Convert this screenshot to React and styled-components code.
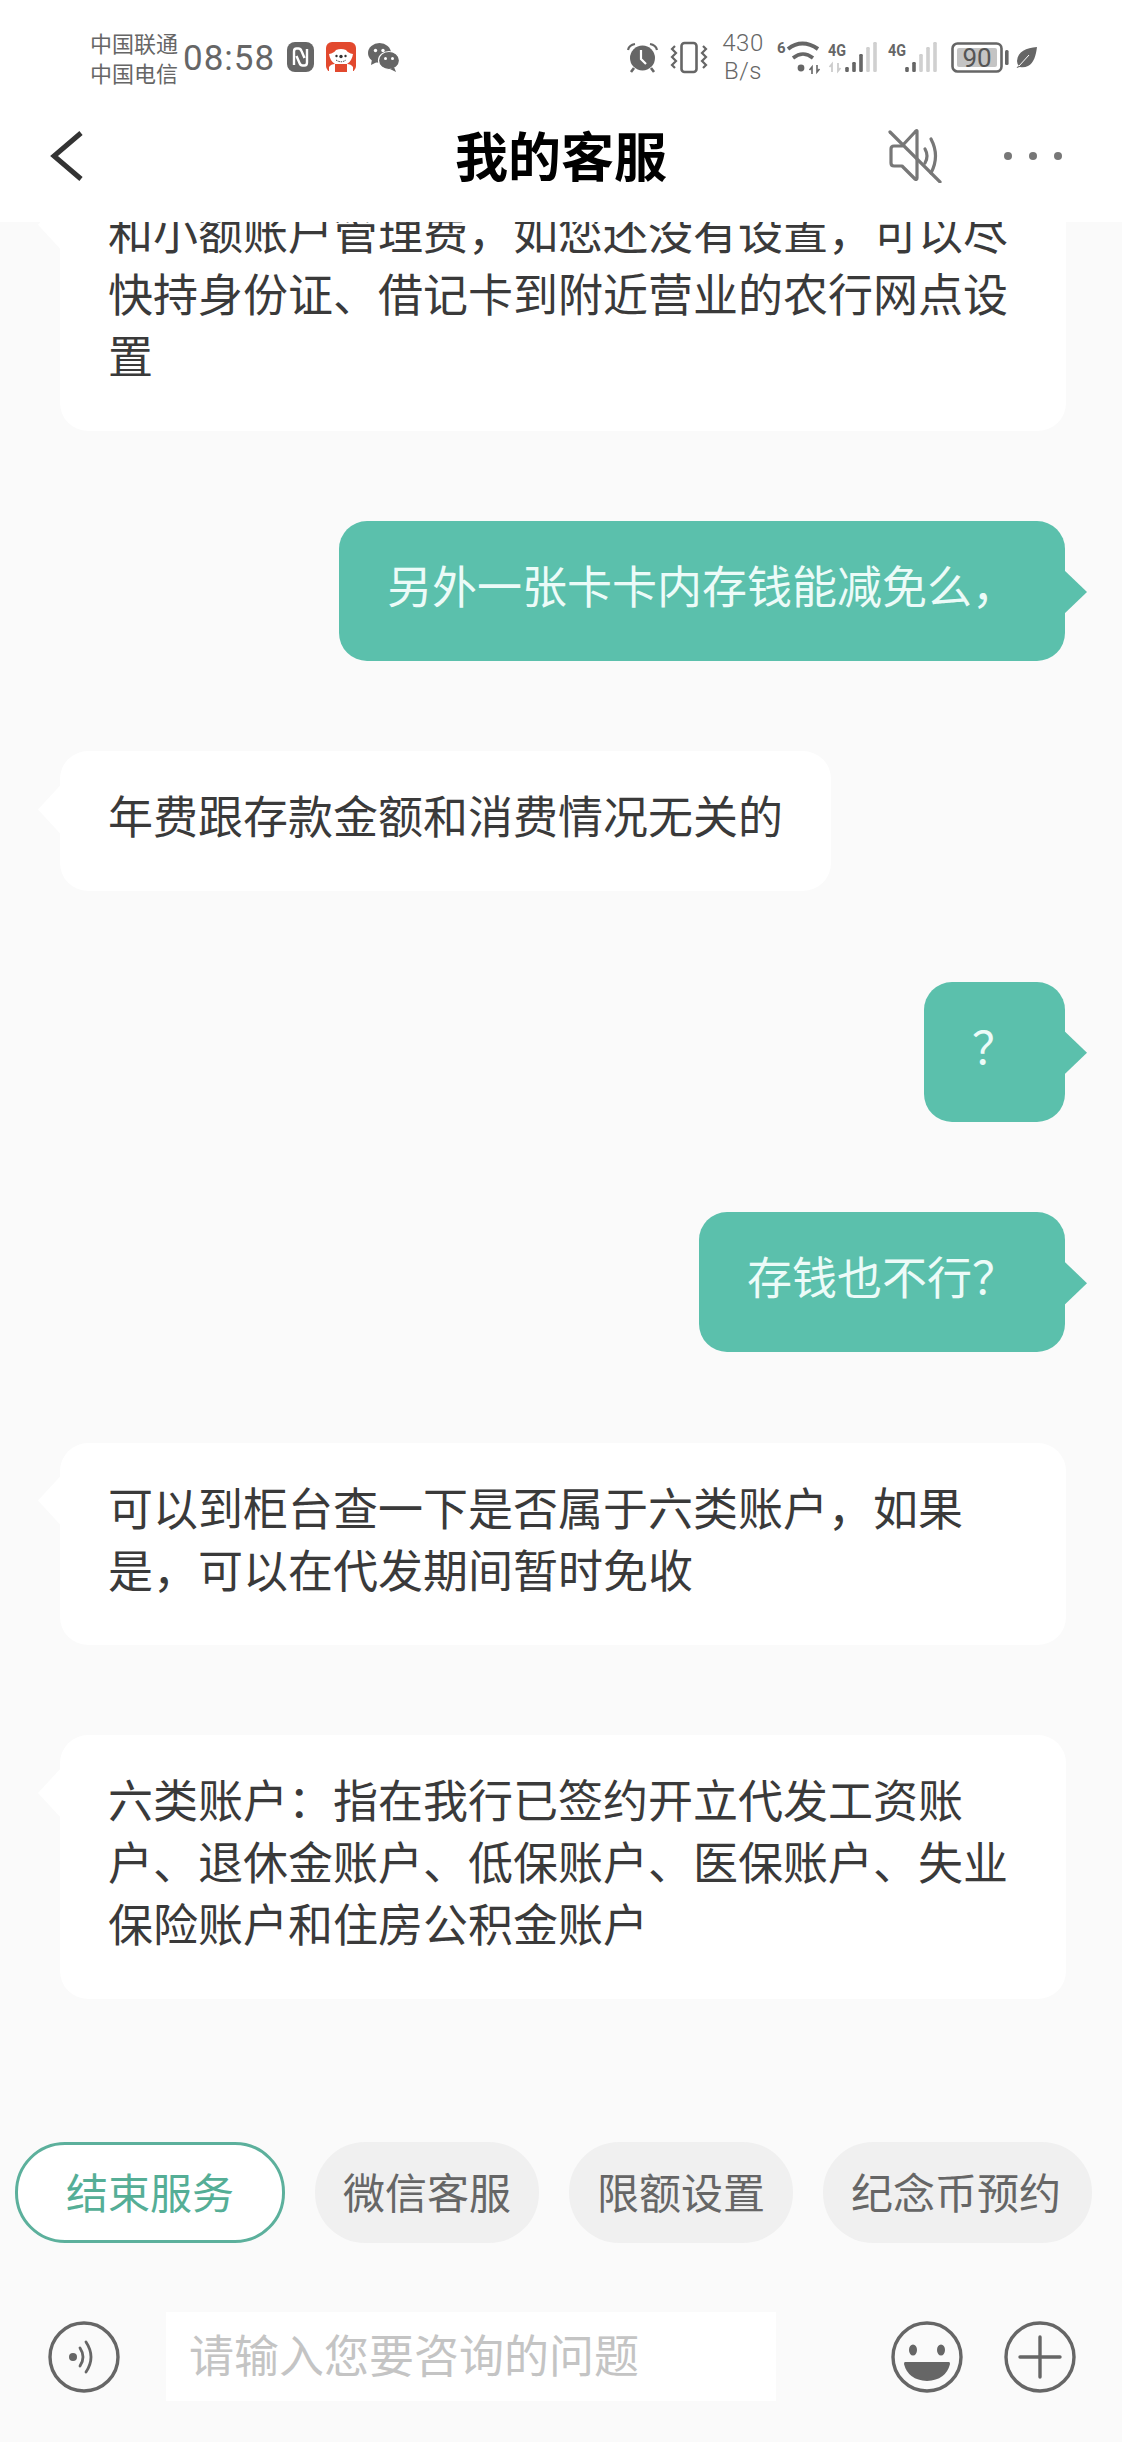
import React from 'react'
import styled, { createGlobalStyle } from 'styled-components'

const GlobalStyle = createGlobalStyle`
  * { box-sizing: border-box; }
  html, body { margin: 0; padding: 0; background: #fafafa; }
  body { font-family: "Noto Sans CJK SC", "Noto Sans", sans-serif; }
`

const messages = [
  { id: 1, mine: false, text: '和小额账户管理费，如您还没有设置，可以尽快持身份证、借记卡到附近营业的农行网点设置' },
  { id: 2, mine: true, text: '另外一张卡卡内存钱能减免么，' },
  { id: 3, mine: false, text: '年费跟存款金额和消费情况无关的' },
  { id: 4, mine: true, text: '？' },
  { id: 5, mine: true, text: '存钱也不行？' },
  { id: 6, mine: false, text: '可以到柜台查一下是否属于六类账户，如果是，可以在代发期间暂时免收' },
  { id: 7, mine: false, text: '六类账户：指在我行已签约开立代发工资账户、退休金账户、低保账户、医保账户、失业保险账户和住房公积金账户' },
]

const chips = ['微信客服', '限额设置', '纪念币预约']

function NfcIcon() {
  return (
    <svg width="27" height="30" viewBox="0 0 27 30">
      <rect x="0" y="0" width="27" height="30" rx="8" fill="#666" />
      <path d="M7 23V9.5q0-3 2.5-3h2q2 0 3 2.5l3 7M20 7v13.5q0 3-2.5 3h-2q-2 0-3-2.5l-3-7" fill="none" stroke="#fff" strokeWidth="2.4" />
    </svg>
  )
}

function RedAppIcon() {
  return (
    <svg width="30" height="30" viewBox="0 0 30 30">
      <rect width="30" height="30" rx="6" fill="#e2492e" />
      <path d="M3 12q5-1 7-4 5-2 10 0 2 3 7 4-1 7-6 10H9q-5-3-6-10z" fill="#fff" />
      <path d="M3 30v-5q2-3 6-3v8zM27 30v-5q-2-3-6-3v8z" fill="#fff" />
      <circle cx="10.500" cy="14" r="1.200" fill="#333" />
      <circle cx="19.500" cy="14" r="1.200" fill="#333" />
      <circle cx="15" cy="14.500" r="1.700" fill="#333" />
      <path d="M10 18q5 3.500 10 0" fill="none" stroke="#333" strokeWidth="1" strokeDasharray="1.500 1" />
    </svg>
  )
}

function WechatIcon() {
  return (
    <svg width="31" height="29" viewBox="0 0 31 29">
      <ellipse cx="11.500" cy="10" rx="11.500" ry="10" fill="#666" />
      <path d="M4 16l-1 6 6-3z" fill="#666" />
      <ellipse cx="21" cy="17.500" rx="10.500" ry="9" fill="#666" stroke="#fff" strokeWidth="1.200" />
      <path d="M26 24l2 5-6-3z" fill="#666" />
      <circle cx="7.500" cy="7.500" r="1.700" fill="#fff" />
      <circle cx="15" cy="7.500" r="1.700" fill="#fff" />
      <circle cx="17.500" cy="15.500" r="1.500" fill="#fff" />
      <circle cx="24.500" cy="15.500" r="1.500" fill="#fff" />
    </svg>
  )
}

function AlarmIcon() {
  return (
    <svg width="31" height="31" viewBox="0 0 31 31">
      <circle cx="15.500" cy="16" r="12.500" fill="#666" />
      <path d="M1 8q1-5 7-6M30 8q-1-5-7-6" fill="none" stroke="#666" strokeWidth="2.200" />
      <path d="M7 26l-3 4M24 26l3 4" stroke="#666" strokeWidth="2.600" />
      <path d="M14 8v9l5 5" fill="none" stroke="#fff" strokeWidth="2.200" />
    </svg>
  )
}

function VibrateIcon() {
  return (
    <svg width="38" height="33" viewBox="0 0 38 33">
      <rect x="11.500" y="2" width="15" height="29" rx="3" fill="none" stroke="#666" strokeWidth="2.600" />
      <path d="M5 5L2 8l4 4-4 4 4 4-4 4 3 3" fill="none" stroke="#666" strokeWidth="2.200" />
      <path d="M33 5l3 3-4 4 4 4-4 4 4 4-3 3" fill="none" stroke="#666" strokeWidth="2.200" />
    </svg>
  )
}

function WifiIcon() {
  return (
    <svg width="46" height="33" viewBox="0 0 46 33" overflow="visible">
      <text x="0" y="12" fontSize="15" fontWeight="700" fontFamily="Roboto, sans-serif" fill="#666">6</text>
      <path d="M11 8Q25-3 41 8" fill="none" stroke="#666" strokeWidth="4" />
      <path d="M16 17Q26 9 36 17" fill="none" stroke="#666" strokeWidth="3.600" />
      <circle cx="24" cy="27" r="3.400" fill="#666" />
      <path d="M35 33v-7l-2.500 3M40 24v7l2.500-3" fill="none" stroke="#666" strokeWidth="1.600" />
    </svg>
  )
}

function SimIcon({ dark, arrows }) {
  const bars = [
    { x: 19, h: 5 },
    { x: 26, h: 10 },
    { x: 33, h: 18 },
    { x: 40, h: 25 },
    { x: 47, h: 30 },
  ]
  return (
    <svg width="50" height="33" viewBox="0 0 50 33" overflow="visible">
      <text x="0" y="15" fontSize="16" fontWeight="700" fontFamily="Roboto, sans-serif" fill="#666" textLength="18" lengthAdjust="spacingAndGlyphs">4G</text>
      {arrows && <path d="M4 31v-8l-2.500 3M10 22v8l2.500-3" fill="none" stroke="#ccc" strokeWidth="1.800" />}
      {bars.map((b, i) => (
        <rect key={b.x} x={b.x - 1.8} y={31 - b.h} width="3.600" height={b.h} rx="1.200" fill={i < dark ? '#666' : '#d0d0d0'} />
      ))}
    </svg>
  )
}

function BatteryIcon() {
  return (
    <svg width="58" height="31" viewBox="0 0 58 31" overflow="visible">
      <rect x="1.500" y="1.500" width="49" height="28" rx="5" fill="none" stroke="#666" strokeWidth="2.600" />
      <rect x="6" y="6" width="40" height="19" rx="2" fill="#c4c4c4" />
      <text x="26" y="25" fontSize="26" textAnchor="middle" fontFamily="Roboto, sans-serif" fill="#555">90</text>
      <rect x="54" y="8" width="3.600" height="15" rx="1.500" fill="#666" />
    </svg>
  )
}

function LeafIcon() {
  return (
    <svg width="21" height="21" viewBox="0 0 21 21">
      <path d="M21 0C10 1 2 4 1 14q0 3 2 5-3 1-2 2 2-1 3-1 4 1 8-1C18 16 20 8 21 0z" fill="#666" />
      <path d="M3 19L13 8" stroke="#fff" strokeWidth="1" />
    </svg>
  )
}

function BackIcon() {
  return (
    <svg width="36" height="52" viewBox="0 0 36 52">
      <path d="M33 3L6 26l27 23" fill="none" stroke="#333" strokeWidth="5" />
    </svg>
  )
}

function MuteIcon() {
  return (
    <svg width="54" height="54" viewBox="0 0 54 54">
      <path d="M29 2v47q0 2-2 1L14 37H6q-3 0-3-3V20q0-3 3-3h8L27 3q2-2 2-1z" fill="none" stroke="#777" strokeWidth="3.200" strokeLinejoin="round" />
      <path d="M37 20q4 7 0 14M43 10q9 17 0 34" fill="none" stroke="#777" strokeWidth="3.200" strokeLinecap="round" />
      <path d="M2 3l50 50" stroke="#777" strokeWidth="3.200" strokeLinecap="round" />
    </svg>
  )
}

function VoiceIcon() {
  return (
    <svg width="72" height="72" viewBox="0 0 72 72">
      <circle cx="36" cy="36" r="34" fill="none" stroke="#666" strokeWidth="3.400" />
      <circle cx="25" cy="36" r="4" fill="#666" />
      <path d="M32 27q6 9 0 18M38 21q10 15 0 30" fill="none" stroke="#666" strokeWidth="2.800" strokeLinecap="round" />
    </svg>
  )
}

function EmojiIcon() {
  return (
    <svg width="72" height="72" viewBox="0 0 72 72">
      <circle cx="36" cy="36" r="34" fill="none" stroke="#666" strokeWidth="3.400" />
      <ellipse cx="22" cy="29" rx="4" ry="5.500" fill="#666" />
      <ellipse cx="50" cy="29" rx="4" ry="5.500" fill="#666" />
      <path d="M14 41h44q1 0 1 2-4 16-23 17-19-1-23-17 0-2 1-2z" fill="#666" />
    </svg>
  )
}

function PlusIcon() {
  return (
    <svg width="72" height="72" viewBox="0 0 72 72">
      <circle cx="36" cy="36" r="34" fill="none" stroke="#666" strokeWidth="3.400" />
      <path d="M16 36h40M36 16v40" stroke="#666" strokeWidth="3.400" strokeLinecap="round" />
    </svg>
  )
}

export default function App() {
  return (
    <Page>
      <GlobalStyle />
      <Top>
        <StatusBar>
          <StatusGroup>
            <Carrier>
              <span>中国联通</span>
              <span>中国电信</span>
            </Carrier>
            <Time>08:58</Time>
            <StatusSlot $gap={12}><NfcIcon /></StatusSlot>
            <StatusSlot $gap={12}><RedAppIcon /></StatusSlot>
            <StatusSlot $gap={12}><WechatIcon /></StatusSlot>
          </StatusGroup>
          <StatusGroup>
            <AlarmIcon />
            <StatusSlot $gap={12}><VibrateIcon /></StatusSlot>
            <Speed>
              <span>430</span>
              <span>B/s</span>
            </Speed>
            <StatusSlot $gap={14}><WifiIcon /></StatusSlot>
            <StatusSlot $gap={5}><SimIcon dark={3} arrows /></StatusSlot>
            <StatusSlot $gap={10}><SimIcon dark={2} /></StatusSlot>
            <StatusSlot $gap={13}><BatteryIcon /></StatusSlot>
            <StatusSlot $gap={7}><LeafIcon /></StatusSlot>
          </StatusGroup>
        </StatusBar>
        <NavBar>
          <BackButton><BackIcon /></BackButton>
          <Title>我的客服</Title>
          <NavActions>
            <MuteIcon />
            <Dots><i /><i /><i /></Dots>
          </NavActions>
        </NavBar>
      </Top>

      <MessageList>
        {messages.map((m) => (
          <Bubble key={m.id} $mine={m.mine}>{m.text}</Bubble>
        ))}
      </MessageList>

      <ChipRow>
        <EndChip>结束服务</EndChip>
        {chips.map((c) => <Chip key={c}>{c}</Chip>)}
        <Chip />
      </ChipRow>

      <InputRow>
        <VoiceIcon />
        <InputBox>请输入您要咨询的问题</InputBox>
        <InputActions>
          <EmojiIcon />
          <PlusIcon />
        </InputActions>
      </InputRow>
    </Page>
  )
}

const Page = styled.div`
  display: flex;
  flex-direction: column;
  width: 1122px;
  height: 2442px;
  overflow: hidden;
  background: #fafafa;
`

const Top = styled.header`
  flex: none;
  height: 222px;
  background: #fff;
`

const StatusBar = styled.div`
  display: flex;
  justify-content: space-between;
  align-items: center;
  height: 90px;
  padding: 24px 85px 0 90px;
  color: #666;
`

const StatusGroup = styled.div`
  display: flex;
  align-items: center;
`

const StatusSlot = styled.div`
  display: flex;
  margin-left: ${(p) => p.$gap}px;
`

const Carrier = styled.div`
  display: flex;
  flex-direction: column;
  width: 88px;
  font-size: 22px;
  line-height: 30px;
`

const Time = styled.span`
  margin-left: 5px;
  position: relative;
  top: 1px;
  font-family: Roboto, sans-serif;
  font-size: 35px;
  letter-spacing: 1px;
`

const Speed = styled.div`
  display: flex;
  flex-direction: column;
  align-items: center;
  width: 40px;
  margin-left: 15px;
  font-family: Roboto, sans-serif;
  font-size: 24px;
  line-height: 28px;
  font-weight: 300;
  letter-spacing: 0.5px;
`

const NavBar = styled.div`
  display: grid;
  grid-template-columns: 1fr auto 1fr;
  align-items: center;
  height: 132px;
  padding: 0 60px;
`

const BackButton = styled.div`
  display: flex;
  align-items: center;
  margin-left: -12px;
`

const Title = styled.h1`
  margin: 0 0 5px;
  font-size: 53px;
  font-weight: 700;
  color: #000;
`

const NavActions = styled.div`
  display: flex;
  justify-content: flex-end;
  align-items: center;
  gap: 62px;
`

const Dots = styled.div`
  display: flex;
  gap: 17px;
  i {
    width: 8px;
    height: 8px;
    border-radius: 50%;
    background: #777;
  }
`

const MessageList = styled.main`
  flex: 1;
  min-height: 0;
  display: flex;
  flex-direction: column;
  justify-content: flex-end;
  gap: 90.4px;
  padding: 0 56px 143px 60px;
  overflow: hidden;
`

const Bubble = styled.div`
  position: relative;
  flex: none;
  align-self: ${(p) => (p.$mine ? 'flex-end' : 'flex-start')};
  max-width: 1006px;
  margin-right: ${(p) => (p.$mine ? '1px' : '0')};
  padding: 33px 48px 45px 48px;
  border-radius: 28px;
  font-size: 45px;
  line-height: 62px;
  background: ${(p) => (p.$mine ? '#5bc0ac' : '#fff')};
  color: ${(p) => (p.$mine ? '#ecfbf8' : '#3a3a3a')};

  &::after {
    content: '';
    position: absolute;
    width: 24px;
    ${(p) => (p.$mine
      ? 'right: -22px; top: 48px; height: 46px; clip-path: polygon(0 0, 100% 50%, 0 100%);'
      : 'left: -22px; top: 32px; height: 52px; clip-path: polygon(100% 0, 0 50%, 100% 100%);')}
    background: inherit;
  }
`

const ChipRow = styled.div`
  flex: none;
  display: flex;
  gap: 30px;
  height: 101px;
  padding-left: 15px;
  overflow: hidden;

  > :nth-child(4) {
    padding-right: 31px;
  }
`

const Chip = styled.div`
  flex: none;
  display: flex;
  align-items: center;
  min-width: 100px;
  height: 101px;
  padding: 0 28px 5px;
  border-radius: 50px;
  font-size: 42px;
  background: #f0f0f0;
  color: #666;
`

const EndChip = styled(Chip)`
  padding: 0 48px 5px 48px;
  border: 3px solid #5cb09c;
  background: #fff;
  color: #55ae96;
`

const InputRow = styled.div`
  flex: none;
  display: flex;
  align-items: center;
  height: 130px;
  margin-top: 69px;
  padding: 0 46px 41px 48px;
`

const InputBox = styled.div`
  display: flex;
  align-items: center;
  width: 610px;
  height: 89px;
  margin-left: 46px;
  padding: 0 0 6px 23px;
  font-size: 45px;
  background: #fff;
  color: #c4c4c4;
`

const InputActions = styled.div`
  display: flex;
  gap: 41px;
  margin-left: auto;
`
